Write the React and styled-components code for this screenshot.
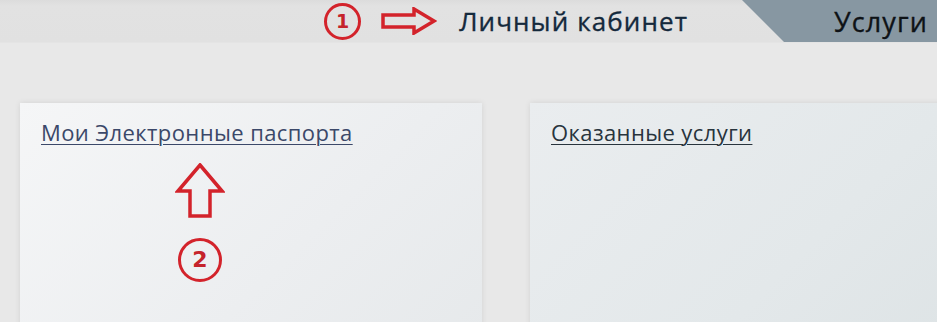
import styled, { createGlobalStyle } from "styled-components";

const GlobalStyle = createGlobalStyle`
  html, body {
    margin: 0;
    padding: 0;
    background: #e8e8e8;
    overflow: hidden;
  }
  body {
    font-family: "Open Sans", "Liberation Sans", sans-serif;
  }
`;

const Page = styled.div`
  width: 937px;
  height: 322px;
  overflow: hidden;
  background: #e8e8e8;
`;

const Header = styled.header`
  height: 42px;
  display: flex;
  align-items: stretch;
  justify-content: flex-end;
  background: linear-gradient(#dcdcdc 0, #e2e2e2 6px, #e1e1e1 100%);
  border-bottom: 1px solid #e4e4e4;
`;

const Marker = styled.div`
  display: flex;
  align-items: center;
  gap: 20px;
  margin-right: 22px;
`;

const Circle = styled.div`
  width: ${(p) => p.size}px;
  height: ${(p) => p.size}px;
  box-sizing: border-box;
  border: 3px solid #d3232b;
  border-radius: 50%;
  display: flex;
  align-items: center;
  justify-content: center;
  color: #c5232b;
  font-family: "DejaVu Sans", sans-serif;
  font-weight: bold;
  font-size: ${(p) => p.fontSize}px;
  line-height: 1;
`;

const NavTitle = styled.div`
  display: flex;
  align-items: center;
  color: #14293c;
  font-size: 26px;
  letter-spacing: 1.1px;
  -webkit-text-stroke: 0.35px #14293c;
  margin-right: 54px;
  padding-bottom: 1px;
`;

const Tab = styled.div`
  width: 195px;
  display: flex;
  align-items: center;
  justify-content: flex-end;
  padding-right: 9px;
  box-sizing: border-box;
  background: #8797a2;
  clip-path: polygon(0 0, 100% 0, 100% 100%, 42px 100%);
  color: #0e1216;
  font-size: 27px;
  letter-spacing: 1.1px;
  -webkit-text-stroke: 0.35px #0e1216;
`;

const Cards = styled.main`
  display: grid;
  grid-template-columns: 462px 462px;
  gap: 48px;
  padding: 60px 0 0 20px;
`;

const Card = styled.section`
  height: 240px;
  padding: 14px 21px;
  box-sizing: border-box;
  background: ${(p) => p.bg};
  box-shadow: 0 0 6px rgba(0, 0, 0, 0.09);
`;

const CardLink = styled.a`
  font-size: 22px;
  letter-spacing: 0.4px;
  color: ${(p) => p.color};
  text-decoration: underline;
  text-underline-offset: 3px;
  text-decoration-thickness: 1px;
  cursor: pointer;
`;

const Hint = styled.div`
  display: flex;
  flex-direction: column;
  align-items: center;
  gap: 20px;
  width: 52px;
  margin: 16px 0 0 133px;
`;

const RightArrow = () => (
  <svg width="56" height="28" viewBox="0 0 56 28">
    <path
      d="M2 8 H33 V2 L53 14 L33 26 V20 H2 Z"
      fill="none"
      stroke="#d3232b"
      strokeWidth="3.5"
      strokeLinejoin="miter"
    />
  </svg>
);

const UpArrow = () => (
  <svg width="50" height="55" viewBox="0 0 50 55">
    <path
      d="M25 2 L47 28 H35 V53 H15 V28 H3 Z"
      fill="none"
      stroke="#d3232b"
      strokeWidth="3.5"
      strokeLinejoin="miter"
    />
  </svg>
);

const App = () => {
  return (
    <Page>
      <GlobalStyle />
      <Header>
        <Marker>
          <Circle size={37} fontSize={19}>1</Circle>
          <RightArrow />
        </Marker>
        <NavTitle>Личный кабинет</NavTitle>
        <Tab>Услуги</Tab>
      </Header>

      <Cards>
        <Card bg="linear-gradient(135deg, #f5f6f7 0%, #eceef0 60%, #e6e9eb 100%)">
          <CardLink color="#3b4869">Мои Электронные паспорта</CardLink>
          <Hint>
            <UpArrow />
            <Circle size={44} fontSize={22}>2</Circle>
          </Hint>
        </Card>
        <Card bg="linear-gradient(135deg, #eaedef 0%, #e3e8ea 60%, #dde3e5 100%)">
          <CardLink color="#28343d">Оказанные услуги</CardLink>
        </Card>
      </Cards>
    </Page>
  );
};

export default App;
